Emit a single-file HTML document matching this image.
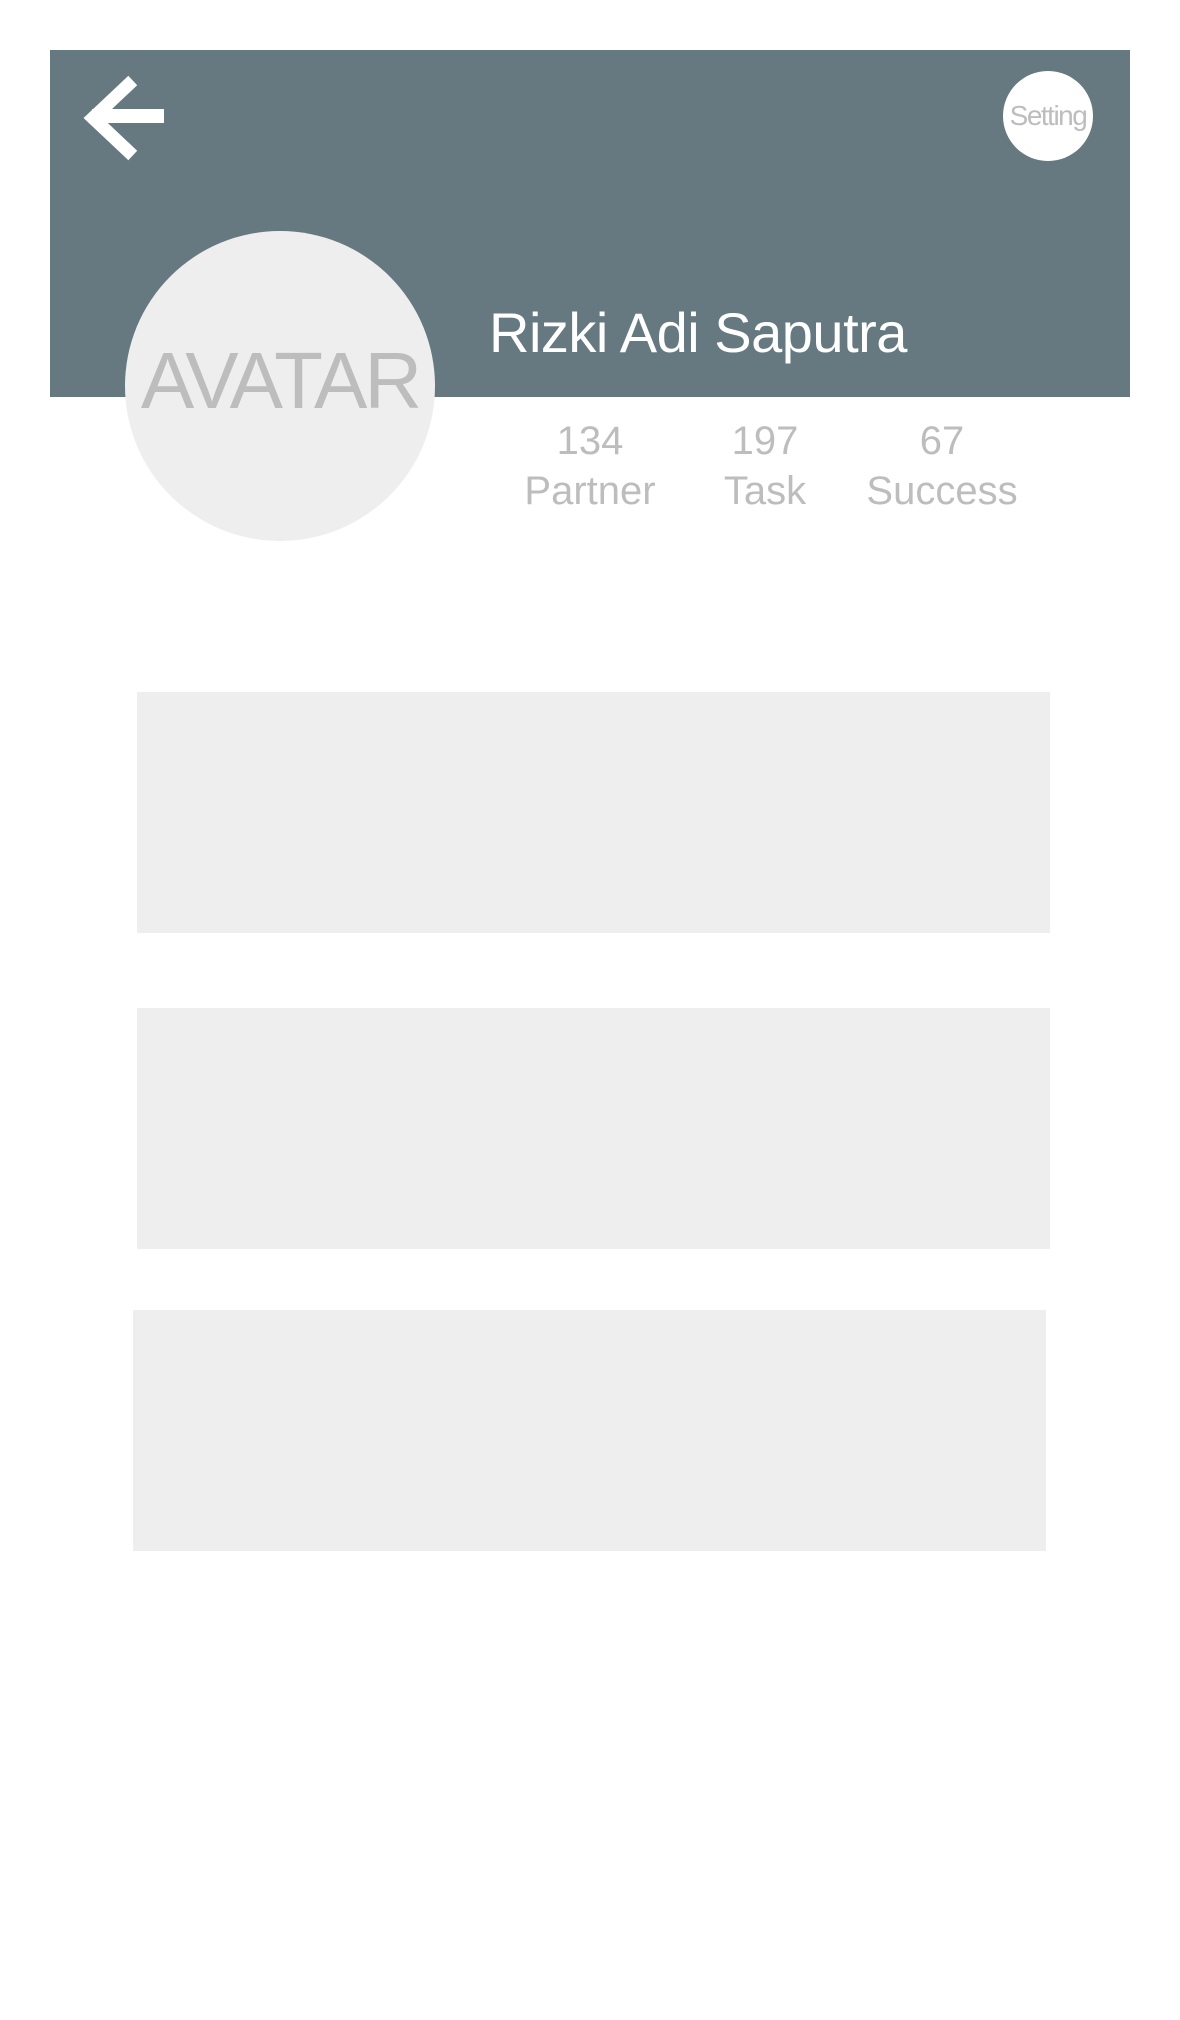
<!DOCTYPE html>
<html><head><meta charset="utf-8"><style>
body{margin:0;width:1180px;height:2020px;background:#fff;position:relative;overflow:hidden;font-family:"Liberation Sans",sans-serif;}
.hdr{position:absolute;left:50px;top:50px;width:1080px;height:347px;background:#667980;}
.set{position:absolute;left:1003px;top:71px;width:90px;height:90px;border-radius:50%;background:#fff;color:#bdbdbd;font-size:28px;line-height:90px;text-align:center;white-space:nowrap;letter-spacing:-1.5px;display:flex;justify-content:center}
.av{position:absolute;left:125px;top:231px;width:310px;height:310px;border-radius:50%;background:#eeeeee;color:#bdbdbd;font-size:80px;text-align:center;line-height:300px;letter-spacing:-3px;white-space:nowrap}
.name{position:absolute;left:489px;top:300px;color:#fff;font-size:56px;line-height:66px;letter-spacing:-0.5px}
.st{position:absolute;top:416px;width:200px;text-align:center;color:#bdbdbd;font-size:40px;line-height:50px}
.box{position:absolute;background:#eeeeee;width:913px;height:241px}
</style></head><body>
<div class="hdr"></div>
<svg style="position:absolute;left:0;top:0" width="200" height="200"><path d="M128 85 L93 118 L128 151" fill="none" stroke="#fff" stroke-width="13" stroke-linecap="square"/><path d="M92 116 H164" stroke="#fff" stroke-width="14"/></svg>
<div class="set"><span>Setting</span></div>
<div class="av">AVATAR</div>
<div class="name">Rizki Adi Saputra</div>
<div class="st" style="left:490px">134<br>Partner</div>
<div class="st" style="left:665px">197<br>Task</div>
<div class="st" style="left:842px">67<br>Success</div>
<div class="box" style="left:137px;top:692px"></div>
<div class="box" style="left:137px;top:1008px"></div>
<div class="box" style="left:133px;top:1310px"></div>
</body></html>
